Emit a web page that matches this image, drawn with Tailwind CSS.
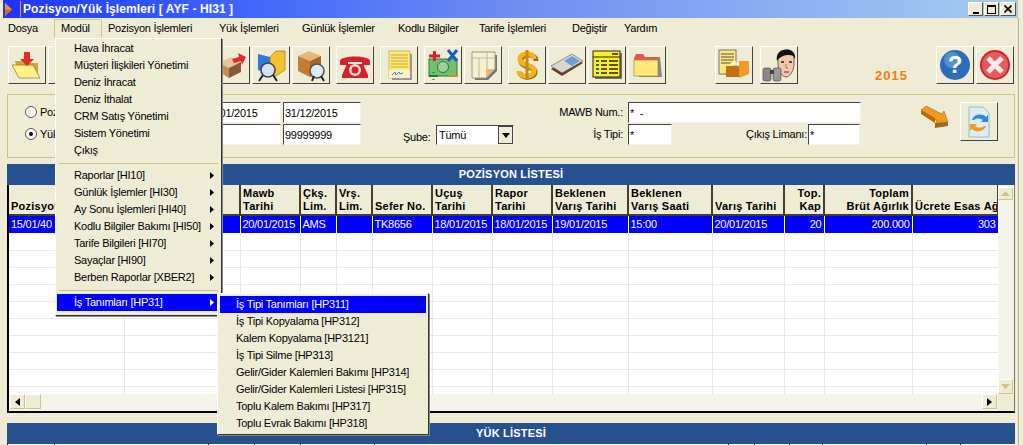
<!DOCTYPE html>
<html lang="tr">
<head>
<meta charset="UTF-8">
<title>Pozisyon/Yük İşlemleri</title>
<script src="https://cdn.jsdelivr.net/npm/@tailwindcss/browser@4"></script>
</head>
<body class="bg-[#efecd6]">
<div class="relative w-[1023px] h-[445px] overflow-hidden bg-[#efecd6] text-[11px] tracking-[-0.25px] text-black font-['Liberation_Sans',Arial,sans-serif]">

  <!-- baslik -->
  <div class="ml-[3px] w-[1015px] h-[18px] flex items-center bg-gradient-to-r from-[#2030ff] via-[#6f8cf2] to-[#a8ccf0]">
    <svg class="ml-[2px] shrink-0" width="8" height="13" viewBox="0 0 8 13"><path d="M0 0l7 6.500-7 6.500z" fill="#f59a18"/><path d="M0 6.500h7L0 13z" fill="#c9700c"/></svg>
    <div class="ml-[7px] w-px h-[16px] bg-[#f59a18]"></div>
    <div class="ml-[2px] text-white font-bold text-[12px] tracking-[0.1px]">Pozisyon/Yük İşlemleri [ AYF - HI31 ]</div>
    <div class="ml-auto mr-[2px] flex gap-px">
      <div class="w-[15px] h-[14px] bg-[#efecd6] border border-t-white border-l-white border-r-[#555] border-b-[#555] flex items-end justify-center pb-[1px]"><div class="w-[6px] h-[2px] bg-black"></div></div>
      <div class="w-[15px] h-[14px] bg-[#efecd6] border border-t-white border-l-white border-r-[#555] border-b-[#555] flex items-center justify-center"><div class="w-[9px] h-[9px] border border-black border-t-2"></div></div>
      <div class="w-[16px] h-[14px] bg-[#efecd6] border border-t-white border-l-white border-r-[#555] border-b-[#555] flex items-center justify-center">
        <svg width="8" height="8" viewBox="0 0 8 8"><path d="M0.500 0.500l7 7M7.500 0.500l-7 7" stroke="#000" stroke-width="1.600"/></svg>
      </div>
    </div>
  </div>

  <!-- menu -->
  <div class="h-[20px] flex items-center pl-[2px]">
    <div class="w-[52px] pl-[6px]">Dosya</div>
    <div class="w-[48px] h-[18px] pl-[6px] flex items-center border border-[#cdc77e] border-b-0">Modül</div>
    <div class="w-[111px] pl-[6px]">Pozisyon İşlemleri</div>
    <div class="w-[83px] pl-[6px]">Yük İşlemleri</div>
    <div class="w-[96px] pl-[6px]">Günlük İşlemler</div>
    <div class="w-[81px] pl-[6px]">Kodlu Bilgiler</div>
    <div class="w-[93px] pl-[6px]">Tarife İşlemleri</div>
    <div class="w-[52px] pl-[6px]">Değiştir</div>
    <div class="w-[60px] pl-[6px]">Yardım</div>
  </div>

  <!-- arac cubugu -->
  <div class="h-[56px] pt-[8px] pl-[8px] flex items-start [&>button]:shrink-0 [&>button]:w-[38px] [&>button]:h-[38px] [&>button]:bg-[#efecd6] [&>button]:border [&>button]:border-t-white [&>button]:border-l-white [&>button]:border-r-[#444] [&>button]:border-b-[#444] [&>button]:flex [&>button]:items-center [&>button]:justify-center">
    <button>
      <svg width="32" height="32" viewBox="0 0 32 32"><path d="M4 12h8l2 2h13v15H8z" fill="#c9a93c"/><path d="M1 16h21l7 13H8z" fill="#fdf08a" stroke="#8a7a2a" stroke-width=".7"/><path d="M13 3h6v7h4l-7 7-7-7h4z" fill="#e52a2a"/></svg>
    </button>
    <button class="ml-[2px]"></button>
    <div class="w-[126px] shrink-0"></div>
    <button>
      <svg width="32" height="32" viewBox="0 0 32 32"><path d="M4 14l12-6 10 5-12 6z" fill="#e7c49c"/><path d="M4 14l10 5v10L4 23z" fill="#c88c55"/><path d="M14 19l12-6v10l-12 6z" fill="#8a5a32"/><path d="M17 10l7-2-1-4 8 4-4 8-1-4-7 2z" fill="#e52a2a"/></svg>
    </button>
    <button class="ml-[2px]">
      <svg width="34" height="34" viewBox="0 0 34 34"><path d="M4 6l12 3v17L4 22z" fill="#2f78e0"/><path d="M16 9l6-6h9v19l-9 6-6-1z" fill="#f2c230" stroke="#8a6a10" stroke-width=".6"/><circle cx="14" cy="22" r="7" fill="#cfe4f2" stroke="#444" stroke-width="1.600"/><path d="M5 33l4-6M23 33l-4-6" stroke="#222" stroke-width="2"/></svg>
    </button>
    <button class="ml-[2px]">
      <svg width="34" height="34" viewBox="0 0 34 34"><path d="M4 8l11-5 12 5-11 5z" fill="#e8b679"/><path d="M4 8l12 5v16L4 23z" fill="#c47c34"/><path d="M16 13l11-5v16l-11 5z" fill="#a9662a"/><circle cx="23" cy="23" r="7" fill="#dcecf4" stroke="#555" stroke-width="1.600"/><path d="M18 33l2-5M30 33l-3-5" stroke="#222" stroke-width="2"/></svg>
    </button>
    <button class="ml-[6px]">
      <svg width="34" height="32" viewBox="0 0 34 32"><path d="M2 12c0-6 30-6 30 0v4h-8v-3H10v3H2z" fill="#d6202a"/><path d="M9 15h16l5 11v3H4v-3z" fill="#d6202a"/><circle cx="17" cy="21" r="6" fill="#f6d6d6"/><circle cx="17" cy="21" r="3.500" fill="#d6202a"/></svg>
    </button>
    <button class="ml-[6px]">
      <svg width="32" height="34" viewBox="0 0 32 34"><rect x="9" y="6" width="20" height="26" fill="#999"/><rect x="6" y="3" width="21" height="27" fill="#ffe87a" stroke="#a89a50" stroke-width=".6"/><rect x="6" y="22" width="21" height="8" fill="#f6f2cf"/><path d="M8 7h17M8 10h17M8 13h17M8 16h17M8 19h17" stroke="#c9a93c"/><path d="M9 27l3-3 1 3 3-3 1 2 3-1" stroke="#4a7ad0" fill="none"/></svg>
    </button>
    <button class="ml-[6px]">
      <svg width="34" height="34" viewBox="0 0 34 34"><rect x="3" y="11" width="28" height="17" fill="#70c070" stroke="#2c7a3c"/><circle cx="17" cy="19" r="5.500" fill="#9ad29a" stroke="#2c7a3c"/><path d="M3 8h11M8.500 3v10" stroke="#d6202a" stroke-width="3"/><path d="M22 2l9 11M31 2l-9 11" stroke="#1c5fb0" stroke-width="3"/><path d="M3 28h9M7.500 24v1M7.500 31v1" stroke="#1c7a3c" stroke-width="2"/><path d="M23 28h9" stroke="#e08a20" stroke-width="2"/></svg>
    </button>
    <button class="ml-[2px]">
      <svg width="32" height="32" viewBox="0 0 32 32"><path d="M8 6h22v16l-9 9H8z" fill="#777"/><path d="M5 3h23v17l-9 9H5z" fill="#f6f2cf" stroke="#9a9a80"/><path d="M5 9h23M12 9v20M20 3v17" stroke="#bdbb9c"/><path d="M19 29l9-9h-9z" fill="#e8b679"/></svg>
    </button>
    <button class="ml-[6px]">
      <svg width="24" height="34" viewBox="0 0 24 34"><path d="M20 12c0-8-15-8-15 0 0 7 14 5 14 11 0 7-15 7-15 0" fill="none" stroke="#9a6a10" stroke-width="5" transform="translate(1 1)"/><path d="M19 11c0-7-14-7-14 0 0 7 14 5 14 12 0 7-15 7-15 0" fill="none" stroke="#f2b41c" stroke-width="5"/><path d="M12 2v30" stroke="#c98a14" stroke-width="3"/></svg>
    </button>
    <button class="ml-[2px]">
      <svg width="34" height="32" viewBox="0 0 34 32"><path d="M1 20L22 7l11 7-21 13z" fill="#6b3d1e"/><path d="M1 17L22 5l11 7-21 12z" fill="#d8d8d0" stroke="#555" stroke-width=".6"/><path d="M14 12l8-5 8 5-8 5z" fill="#6aa0e0"/></svg>
    </button>
    <button class="ml-[2px]">
      <svg width="32" height="32" viewBox="0 0 32 32"><rect x="4" y="4" width="27" height="26" fill="#777"/><rect x="2" y="2" width="27" height="26" fill="#ffee20" stroke="#222"/><path d="M2 8h27" stroke="#222"/><path d="M21 5h6" stroke="#222" stroke-width="1.500"/><path d="M5 12h3M5 16h3M5 20h3M5 24h3" stroke="#2060c0" stroke-width="2"/><path d="M10 12h6M18 12h9M10 16h6M18 16h9M10 20h6M18 20h9M10 24h6M18 24h9" stroke="#222" stroke-width="1.600"/></svg>
    </button>
    <button class="ml-[2px]">
      <svg width="32" height="32" viewBox="0 0 32 32"><path d="M6 8h23l2 20H8z" fill="#888"/><path d="M3 9l2-4h7l2 3h14v3H3z" fill="#e2585a"/><path d="M3 11h24v16H3z" fill="#ffe77a" stroke="#a08a30" stroke-width=".7"/></svg>
    </button>
    <div class="w-[49px] shrink-0"></div>
    <button>
      <svg width="34" height="34" viewBox="0 0 34 34"><rect x="2" y="2" width="17" height="24" fill="#ffe87a" stroke="#777"/><path d="M4 6h13M4 9h13M4 12h13M4 15h13" stroke="#555"/><rect x="9" y="18" width="13" height="11" fill="#c86d1a"/><path d="M22 13h10v13l-10 4z" fill="#ef9a2a"/><path d="M12 17l5-5 5 5z" fill="#fff6b0"/></svg>
    </button>
    <button class="ml-[7px]">
      <svg width="36" height="36" viewBox="0 0 36 36"><path d="M17 9c0-8 16-8 16 1v8c-1 8-5 12-8 12s-8-5-8-13z" fill="#f3c7a8" stroke="#333" stroke-width=".7"/><path d="M16 14c-3-14 20-16 18-2-2-5-4-3-6-4-4 0-9 1-12 6z" fill="#111"/><path d="M20 15h3M28 15h3" stroke="#222" stroke-width="1.500"/><path d="M25 17v4h2" stroke="#a8745a" fill="none"/><path d="M23 25h5" stroke="#9c3a2e" stroke-width="1.200"/><rect x="2" y="21" width="8" height="13" rx="2" fill="#888" stroke="#444" stroke-width=".6"/><rect x="12" y="21" width="8" height="13" rx="2" fill="#999" stroke="#444" stroke-width=".6"/><rect x="9" y="23" width="4" height="4" fill="#444"/></svg>
    </button>
    <div class="w-[138px] h-[38px] shrink-0 flex items-end pb-[2px]"><span class="ml-[77px] text-[#f47a10] font-bold text-[13px] tracking-[1px] leading-none">2015</span></div>
    <button>
      <svg width="32" height="32" viewBox="0 0 32 32"><circle cx="16" cy="16" r="15" fill="#2c6db8"/><circle cx="13" cy="11" r="8" fill="#7fb2e4" opacity=".5"/><text x="16" y="24" text-anchor="middle" fill="#fff" font-size="24" font-weight="700" font-family="Liberation Sans">?</text></svg>
    </button>
    <button class="ml-[2px]">
      <svg width="32" height="32" viewBox="0 0 32 32"><circle cx="16" cy="16" r="15" fill="#c8282c"/><circle cx="16" cy="16" r="13" fill="#e65c5c"/><path d="M9 9l14 14M23 9L9 23" stroke="#f6eaea" stroke-width="5"/></svg>
    </button>
  </div>

  <!-- filtre formu -->
  <div class="relative ml-[7px] w-[1008px] h-[64px] border border-[#cdc77e] [&_input]:bg-white [&_input]:px-[1px] [&_input]:outline-none [&_input]:border [&_input]:border-t-[#444] [&_input]:border-l-[#444] [&_input]:border-r-[#f5f3e4] [&_input]:border-b-[#f5f3e4]">
    <div class="flex h-full">
      <div class="w-[12px] shrink-0"></div>
      <div class="w-[183px] shrink-0 pt-[11px] flex flex-col gap-[10px]">
        <div class="flex items-center gap-[3px] h-[12px]"><span class="ml-[5px] w-[12px] h-[12px] rounded-full bg-white border border-[#555]"></span>Poz</div>
        <div class="flex items-center gap-[3px] h-[12px]"><span class="ml-[5px] w-[12px] h-[12px] rounded-full bg-white border border-[#555] flex items-center justify-center"><span class="w-[4px] h-[4px] rounded-full bg-black"></span></span>Yük</div>
      </div>
      <div class="pt-[7px] flex flex-col gap-[1px]">
        <div class="flex gap-[2px]"><input class="w-[78px] h-[21px] pl-[2px]" value="01/01/2015"><input class="w-[78px] h-[21px]" value="31/12/2015"></div>
        <div class="flex gap-[2px]"><input class="w-[78px] h-[21px]" value=""><input class="w-[78px] h-[21px]" value="99999999"></div>
      </div>
      <div class="ml-[42px] pt-[30px] flex items-start">
        <span class="mt-[4px] w-[33px]">Şube:</span>
        <div class="w-[78px] h-[20px] bg-white border border-t-[#444] border-l-[#444] border-r-[#f5f3e4] border-b-[#f5f3e4] flex items-center pl-[2px]">Tümü
          <span class="ml-auto w-[15px] h-[18px] bg-[#efecd6] border border-[#444] flex items-center justify-center"><svg width="8" height="5" viewBox="0 0 8 5"><path d="M0 0h8L4 5z" fill="#000"/></svg></span>
        </div>
      </div>
      <div class="ml-[46px] w-[63px] pt-[7px] flex flex-col items-end gap-[1px] whitespace-nowrap [&>span]:h-[21px] [&>span]:flex [&>span]:items-center">
        <span>MAWB Num.:</span>
        <span>İş Tipi:</span>
      </div>
      <div class="ml-[5px] pt-[7px] flex flex-col gap-[1px]">
        <input class="w-[233px] h-[21px]" value="*  -">
        <div class="flex items-center">
          <input class="w-[44px] h-[21px]" value="*">
          <span class="ml-[74px] w-[57px] whitespace-nowrap">Çıkış Limanı:</span>
          <input class="ml-[5px] w-[52px] h-[21px]" value="*">
        </div>
      </div>
      <svg class="ml-[59px] mt-[10px]" width="30" height="24" viewBox="0 0 30 24"><path d="M1 5l5-4 16 8 2-3 4 11-13 2 2-3z" fill="#f0991e" stroke="#8a5a10" stroke-width=".5"/><path d="M1 5l14 8v5L1 9z" fill="#b56a12"/><path d="M15 18l13-1v4l-13 2z" fill="#9a6a20"/></svg>
      <button class="ml-[10px] mt-[7px] w-[38px] h-[39px] border border-t-white border-l-white border-r-[#444] border-b-[#444] flex items-center justify-center">
        <svg width="24" height="32" viewBox="0 0 24 32"><path d="M2 1h14l6 6v24H2z" fill="#dcecf6" stroke="#9ab8cc"/><path d="M5 14c2-6 10-7 14-3l2-2v7h-7l2-2c-3-2-7-2-9 0z" fill="#2c8ad8"/><path d="M19 20c-2 6-10 7-14 3l-2 2v-7h7l-2 2c3 2 7 2 9 0z" fill="#f0991e"/></svg>
      </button>
    </div>
  </div>

  <!-- pozisyon listesi -->
  <div class="mt-[6px] ml-[7px] w-[1008px] h-[21px] bg-[#27508f] text-white font-bold text-[11px] tracking-[0.2px] flex items-center justify-center">POZİSYON LİSTESİ</div>
  <div class="ml-[7px] w-[1008px] h-[228px] border-l-2 border-l-black border-b-2 border-b-black border-r border-r-[#777] flex flex-col bg-white">
    <div class="flex h-[209px]">
      <div class="w-[989px] h-[209px] overflow-hidden">
        <table class="table-fixed w-[989px] border-collapse [&_td]:h-[17px] [&_td]:p-0 [&_td]:border-r [&_td]:border-b [&_td]:border-[#e8e8e8] [&_th]:h-[30px] [&_th]:px-[2px] [&_th]:pb-[1px] [&_th]:align-bottom [&_th]:text-left [&_th]:bg-[#efecd6] [&_th]:font-bold [&_th]:tracking-[0.25px] [&_th]:leading-[13px] [&_th]:border-r-2 [&_th]:border-b-2 [&_th]:border-r-[#403f30] [&_th]:border-b-[#403f30] [&_th]:whitespace-nowrap [&_th]:overflow-hidden">
          <colgroup>
            <col class="w-[115px]"><col class="w-[116px]"><col class="w-[60px]"><col class="w-[36px]"><col class="w-[36px]"><col class="w-[60px]"><col class="w-[60px]"><col class="w-[60px]"><col class="w-[76px]"><col class="w-[84px]"><col class="w-[72px]"><col class="w-[40px]"><col class="w-[88px]"><col class="w-[86px]">
          </colgroup>
          <thead>
            <tr>
              <th>Pozisyon</th><th></th><th>Mawb<br>Tarihi</th><th>Çkş.<br>Lim.</th><th>Vrş.<br>Lim.</th><th>Sefer No.</th><th>Uçuş<br>Tarihi</th><th>Rapor<br>Tarihi</th><th>Beklenen<br>Varış Tarihi</th><th>Beklenen<br>Varış Saati</th><th>Varış Tarihi</th><th class="!text-right">Top.<br>Kap</th><th class="!text-right">Toplam<br>Brüt Ağırlık</th><th>Ücrete Esas Ağ</th>
            </tr>
          </thead>
          <tbody>
            <tr class="bg-[#0000ff] text-white [&>td]:!border-r-white [&>td]:!border-b-white [&>td]:px-[2px] [&>td]:whitespace-nowrap [&>td]:overflow-hidden">
              <td>15/01/40</td><td></td><td>20/01/2015</td><td>AMS</td><td></td><td>TK8656</td><td>18/01/2015</td><td>18/01/2015</td><td>19/01/2015</td><td>15:00</td><td>20/01/2015</td><td class="text-right">20</td><td class="text-right">200.000</td><td class="text-right">303</td>
            </tr>
            <tr><td></td><td></td><td></td><td></td><td></td><td></td><td></td><td></td><td></td><td></td><td></td><td></td><td></td><td></td></tr>
            <tr><td></td><td></td><td></td><td></td><td></td><td></td><td></td><td></td><td></td><td></td><td></td><td></td><td></td><td></td></tr>
            <tr><td></td><td></td><td></td><td></td><td></td><td></td><td></td><td></td><td></td><td></td><td></td><td></td><td></td><td></td></tr>
            <tr><td></td><td></td><td></td><td></td><td></td><td></td><td></td><td></td><td></td><td></td><td></td><td></td><td></td><td></td></tr>
            <tr><td></td><td></td><td></td><td></td><td></td><td></td><td></td><td></td><td></td><td></td><td></td><td></td><td></td><td></td></tr>
            <tr><td></td><td></td><td></td><td></td><td></td><td></td><td></td><td></td><td></td><td></td><td></td><td></td><td></td><td></td></tr>
            <tr><td></td><td></td><td></td><td></td><td></td><td></td><td></td><td></td><td></td><td></td><td></td><td></td><td></td><td></td></tr>
            <tr><td></td><td></td><td></td><td></td><td></td><td></td><td></td><td></td><td></td><td></td><td></td><td></td><td></td><td></td></tr>
            <tr><td></td><td></td><td></td><td></td><td></td><td></td><td></td><td></td><td></td><td></td><td></td><td></td><td></td><td></td></tr>
            <tr><td></td><td></td><td></td><td></td><td></td><td></td><td></td><td></td><td></td><td></td><td></td><td></td><td></td><td></td></tr>
          </tbody>
        </table>
      </div>
      <!-- dikey kaydirma -->
      <div class="w-[16px] bg-[#f5f4ea] flex flex-col pt-[2px]">
        <div class="w-[15px] h-[13px] bg-[#efecd6] border border-t-white border-l-white border-r-[#cdc77e] border-b-[#cdc77e] flex items-center justify-center"><svg width="9" height="5" viewBox="0 0 9 5"><path d="M0 5h9L4.500 0z" fill="#cdc77e"/></svg></div>
        <div class="mt-auto w-[15px] h-[15px] bg-[#efecd6] border border-t-white border-l-white border-r-[#cdc77e] border-b-[#cdc77e] flex items-center justify-center"><svg width="9" height="5" viewBox="0 0 9 5"><path d="M0 0h9L4.500 5z" fill="#cdc77e"/></svg></div>
      </div>
    </div>
    <!-- yatay kaydirma -->
    <div class="flex h-[17px] bg-[#f5f4ea]">
      <div class="w-[15px] h-[15px] ml-px bg-[#efecd6] border border-t-white border-l-white border-r-[#cdc77e] border-b-[#cdc77e] flex items-center justify-center"><svg width="5" height="8" viewBox="0 0 5 8"><path d="M5 0v8L0 4z" fill="#000"/></svg></div>
      <div class="w-[16px] h-[15px] bg-[#efecd6] border border-t-white border-l-white border-r-[#cdc77e] border-b-[#cdc77e]"></div>
      <div class="ml-auto w-[15px] h-[15px] bg-[#efecd6] border border-t-white border-l-white border-r-[#cdc77e] border-b-[#cdc77e] flex items-center justify-center"><svg width="5" height="8" viewBox="0 0 5 8"><path d="M0 0v8l5-4z" fill="#000"/></svg></div>
      <div class="ml-px w-[16px] bg-[#efecd6]"></div>
    </div>
  </div>

  <!-- yuk listesi -->
  <div class="mt-[10px] ml-[7px] w-[1008px] h-[21px] bg-[#27508f] text-white font-bold text-[11px] tracking-[0.2px] flex items-center justify-center">YÜK LİSTESİ</div>
  <div class="ml-[7px] w-[1008px] h-px bg-white flex [&>i]:block [&>i]:w-px [&>i]:bg-black [&>i]:h-px">
    <i></i><i class="ml-[46px]"></i><i class="ml-[153px]"></i><i class="ml-[45px]"></i><i class="ml-[45px]"></i><i class="ml-[73px]"></i><i class="ml-[353px]"></i><i class="ml-[25px]"></i><i class="ml-[34px]"></i><i class="ml-[32px]"></i><i class="ml-[103px]"></i><i class="ml-[33px]"></i>
  </div>

  <!-- pencere kenari -->
  <div class="absolute left-[1018px] top-[18px] bottom-0 w-px bg-[#b5b39c]"></div>

  <!-- modul menusu -->
  <div class="absolute left-[55px] top-[38px] w-[167px] h-[278px] bg-[#efecd6] border border-t-white border-l-white border-r-[#333] border-b-[#333] shadow-[1px_1px_0_#888] pt-[1px] px-[1px] [&_.it]:h-[17px] [&_.it]:flex [&_.it]:items-center [&_.it]:pl-[17px] [&_.it]:pr-[6px]">
    <div class="it">Hava İhracat</div>
    <div class="it">Müşteri İlişkileri Yönetimi</div>
    <div class="it">Deniz İhracat</div>
    <div class="it">Deniz İthalat</div>
    <div class="it">CRM Satış Yönetimi</div>
    <div class="it">Sistem Yönetimi</div>
    <div class="it">Çıkış</div>
    <div class="h-[8px] flex items-center px-[2px]"><div class="w-full h-px bg-[#cdc77e]"></div></div>
    <div class="it justify-between">Raporlar [HI10]<svg width="4" height="7" viewBox="0 0 4 7"><path d="M0 0v7l4-3.500z"/></svg></div>
    <div class="it justify-between">Günlük İşlemler [HI30]<svg width="4" height="7" viewBox="0 0 4 7"><path d="M0 0v7l4-3.500z"/></svg></div>
    <div class="it justify-between">Ay Sonu İşlemleri [HI40]<svg width="4" height="7" viewBox="0 0 4 7"><path d="M0 0v7l4-3.500z"/></svg></div>
    <div class="it justify-between">Kodlu Bilgiler Bakımı [HI50]<svg width="4" height="7" viewBox="0 0 4 7"><path d="M0 0v7l4-3.500z"/></svg></div>
    <div class="it justify-between">Tarife Bilgileri [HI70]<svg width="4" height="7" viewBox="0 0 4 7"><path d="M0 0v7l4-3.500z"/></svg></div>
    <div class="it justify-between">Sayaçlar [HI90]<svg width="4" height="7" viewBox="0 0 4 7"><path d="M0 0v7l4-3.500z"/></svg></div>
    <div class="it justify-between">Berben Raporlar [XBER2]<svg width="4" height="7" viewBox="0 0 4 7"><path d="M0 0v7l4-3.500z"/></svg></div>
    <div class="h-[8px] flex items-center px-[2px]"><div class="w-full h-px bg-[#cdc77e]"></div></div>
    <div class="it justify-between bg-[#0000ff] text-white">İş Tanımları [HP31]<svg width="4" height="7" viewBox="0 0 4 7"><path d="M0 0v7l4-3.500z" fill="#fff"/></svg></div>
  </div>

  <!-- is tanimlari alt menusu -->
  <div class="absolute left-[217px] top-[293px] w-[212px] h-[142px] bg-[#efecd6] border border-t-white border-l-white border-r-[#333] border-b-[#333] shadow-[1px_1px_0_#888] pt-[2px] px-[2px] [&>div]:h-[17px] [&>div]:flex [&>div]:items-center [&>div]:pl-[16px]">
    <div class="bg-[#0000ff] text-white">İş Tipi Tanımları [HP311]</div>
    <div>İş Tipi Kopyalama [HP312]</div>
    <div>Kalem Kopyalama [HP3121]</div>
    <div>İş Tipi Silme [HP313]</div>
    <div>Gelir/Gider Kalemleri Bakımı [HP314]</div>
    <div>Gelir/Gider Kalemleri Listesi [HP315]</div>
    <div>Toplu Kalem Bakımı [HP317]</div>
    <div>Toplu Evrak Bakımı [HP318]</div>
  </div>
</div>
</body>
</html>
